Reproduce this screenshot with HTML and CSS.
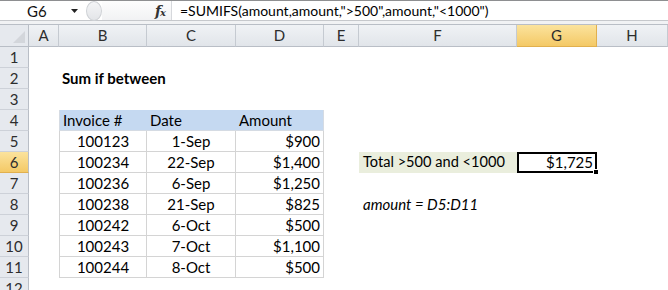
FILE: index.html
```html
<!DOCTYPE html>
<html>
<head>
<meta charset="utf-8">
<link rel="stylesheet" href="styles.css">
</head>
<body>
<div class="app">
  <div class="fbar">
    <div class="namebox"><span class="ref">G6</span><svg class="drop" width="7" height="4" viewBox="0 0 7 4"><path d="M0 0H7L3.5 4Z" fill="#222"/></svg></div>
    <div class="grip"><div class="knob"></div></div>
    <div class="fxzone"><span class="fx"><i>f</i><i class="x">x</i></span></div>
    <div class="formula">=SUMIFS(amount,amount,"&gt;500",amount,"&lt;1000")</div>
  </div>
  <div class="gap"></div>
  <div class="sheet">
    <div class="corner"><svg width="12" height="12" viewBox="0 0 12 12"><path d="M12 0V12H0Z" fill="#d3d6db"/></svg></div>
    <div class="ch">A</div><div class="ch">B</div><div class="ch">C</div><div class="ch">D</div><div class="ch">E</div><div class="ch">F</div><div class="ch sel">G</div><div class="ch">H</div>

    <div class="rh">1</div><div></div><div></div><div></div><div></div><div></div><div></div><div></div><div></div>

    <div class="rh">2</div><div></div><div class="c title">Sum if between</div><div></div><div></div><div></div><div></div><div></div><div></div>

    <div class="rh">3</div><div></div><div></div><div></div><div></div><div></div><div></div><div></div><div></div>

    <div class="rh">4</div><div></div><div class="c th first">Invoice #</div><div class="c th">Date</div><div class="c th last">Amount</div><div></div><div></div><div></div><div></div>

    <div class="rh">5</div><div></div><div class="c td ctr first">100123</div><div class="c td ctr">1-Sep</div><div class="c td num last">$900</div><div></div><div></div><div></div><div></div>

    <div class="rh sel">6</div><div></div><div class="c td ctr first">100234</div><div class="c td ctr">22-Sep</div><div class="c td num last">$1,400</div><div></div><div class="c label">Total &gt;500 and &lt;1000</div><div class="c active">$1,725<span class="handle"></span></div><div></div>

    <div class="rh">7</div><div></div><div class="c td ctr first">100236</div><div class="c td ctr">6-Sep</div><div class="c td num last">$1,250</div><div></div><div></div><div></div><div></div>

    <div class="rh">8</div><div></div><div class="c td ctr first">100238</div><div class="c td ctr">21-Sep</div><div class="c td num last">$825</div><div></div><div class="c note">amount = D5:D11</div><div></div><div></div>

    <div class="rh">9</div><div></div><div class="c td ctr first">100242</div><div class="c td ctr">6-Oct</div><div class="c td num last">$500</div><div></div><div></div><div></div><div></div>

    <div class="rh">10</div><div></div><div class="c td ctr first">100243</div><div class="c td ctr">7-Oct</div><div class="c td num last">$1,100</div><div></div><div></div><div></div><div></div>

    <div class="rh">11</div><div></div><div class="c td ctr first bottom">100244</div><div class="c td ctr bottom">8-Oct</div><div class="c td num last bottom">$500</div><div></div><div></div><div></div><div></div>

    <div class="rh">12</div><div></div><div></div><div></div><div></div><div></div><div></div><div></div><div></div>
  </div>
</div>
</body>
</html>
```

FILE: styles.css
```css
* { box-sizing: border-box; }
html, body { margin: 0; padding: 0; background: #fff; }
body { font-family: Lato, "Open Sans", sans-serif; font-size: 15px; color: #000; overflow: hidden; }
.app { width: 668px; height: 290px; overflow: hidden; }

.fbar {
  height: 21px;
  display: flex;
  border-top: 1px solid #8e8f91;
  border-bottom: 1px solid #c6c8cc;
  background: #fff;
}
.namebox {
  width: 86px;
  display: flex;
  align-items: center;
  padding-left: 27px;
  font-size: 15px;
  color: #111;
}
.namebox .ref { flex: 1; }
.drop { margin-right: 8px; }
.grip {
  width: 16px;
  display: flex;
  align-items: center;
}
.knob {
  width: 16px;
  height: 20px;
  border-radius: 50%;
  border: 1px solid #cfd2d6;
  background: linear-gradient(#f4f5f7, #e3e5e8);
}
.fxzone {
  width: 70px;
  display: flex;
  align-items: center;
  justify-content: flex-end;
  padding-right: 6px;
  border-right: 1px solid #d6d8dc;
  background: linear-gradient(#fdfdfd, #f1f2f4);
}
.fx { font-family: "DejaVu Serif", serif; font-weight: bold; font-size: 14px; color: #333; letter-spacing: -1px; }
.fx .x { font-size: 10px; }
.formula { flex: 1; padding-left: 8px; line-height: 19px; white-space: nowrap; font-size: 14px; }

.gap { height: 4px; background: #f1f2f4; border-bottom: 1px solid #b9bec6; }

.sheet {
  display: grid;
  grid-template-columns: 29px 30px 88px 89px 88px 35px 158px 80px 71px;
  grid-template-rows: 22px repeat(12, 21px);
}
.corner {
  background: #e6e9ee;
  border-right: 1px solid #b9bec6;
  border-bottom: 1px solid #b9bec6;
  display: flex;
  align-items: flex-end;
  justify-content: flex-end;
  padding: 0 3px 3px 0;
}
.corner svg { display: block; }
.ch {
  background: linear-gradient(#f0f2f5, #e1e5ea);
  border-right: 1px solid #c5cad1;
  border-bottom: 1px solid #b9bec6;
  text-align: center;
  line-height: 21px;
  color: #2d2d2d;
}
.ch.sel {
  background: linear-gradient(#fbe39d, #f4c966);
  border-right-color: #e1b04e;
  border-bottom-color: #e1b04e;
}
.rh {
  background: #e6e9ee;
  border-right: 1px solid #b9bec6;
  border-bottom: 1px solid #cdd1d8;
  text-align: center;
  line-height: 20px;
  color: #2d2d2d;
}
.rh.sel { background: linear-gradient(#fbe39d, #f4c966); border-bottom-color: #e1b04e; }

.c { white-space: nowrap; line-height: 20px; padding: 0 3px; }
.title { font-weight: bold; }
.th { background: #c5d9f1; border-bottom: 1px solid #d5dbe3; }
.th.first { border-left: 1px solid #d5dbe3; }
.th.last { border-right: 1px solid #d5dbe3; }
.td { border-right: 1px solid #d4d4d4; border-bottom: 1px solid #d4d4d4; }
.td.first { border-left: 1px solid #d4d4d4; }
.ctr { text-align: center; }
.num { text-align: right; }
.label { background: #eaeedd; padding-left: 4px; font-size: 14.6px; }
.active {
  position: relative;
  border: 2px solid #000;
  text-align: right;
  line-height: 17px;
  padding-right: 2px;
}
.handle {
  position: absolute;
  right: -4px;
  bottom: -4px;
  width: 6px;
  height: 6px;
  background: #000;
  border: 1px solid #fff;
}
.note { font-style: italic; padding-left: 4px; }
```
